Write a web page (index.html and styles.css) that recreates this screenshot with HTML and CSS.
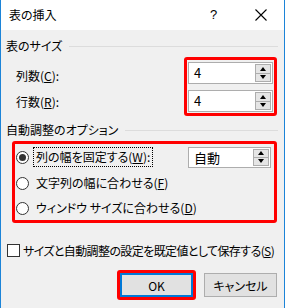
FILE: index.html
```html
<!DOCTYPE html>
<html lang="ja">

<head>
    <meta charset="UTF-8">
    <title>表の挿入</title>
    <link rel="stylesheet" href="styles.css">
</head>

<body>
    <div class="dialog">
        <div class="titlebar">
            <span class="title">表の挿入</span>
            <span class="help">?</span>
            <span class="close">
                <svg width="12" height="12" viewBox="0 0 12 12">
                    <path d="M0.5 0.5 L11.5 11.5 M11.5 0.5 L0.5 11.5" stroke="#000" stroke-width="1.1" fill="none" />
                </svg>
            </span>
        </div>
        <div class="content">
            <div class="group-head">
                <span>表のサイズ</span>
                <i class="rule"></i>
            </div>
            <div class="size-rows">
                <div class="size-labels">
                    <div class="label">列数(<u>C</u>):</div>
                    <div class="label">行数(<u>R</u>):</div>
                </div>
                <div class="mark mark-size">
                    <div class="spin">
                        <span class="spin-value">4</span>
                        <span class="spin-btns">
                            <span class="spin-btn"><i class="arrow-up"></i></span>
                            <span class="spin-btn"><i class="arrow-down"></i></span>
                        </span>
                    </div>
                    <div class="spin">
                        <span class="spin-value">4</span>
                        <span class="spin-btns">
                            <span class="spin-btn"><i class="arrow-up"></i></span>
                            <span class="spin-btn"><i class="arrow-down"></i></span>
                        </span>
                    </div>
                </div>
            </div>
            <div class="group-head group-head-options">
                <span>自動調整のオプション</span>
                <i class="rule"></i>
            </div>
            <div class="mark mark-options">
                <div class="option">
                    <span class="radio checked"></span>
                    <span class="option-text focus">列の幅を固定する(<u>W</u>):</span>
                    <div class="spin spin-auto">
                        <span class="spin-value">自動</span>
                        <span class="spin-btns">
                            <span class="spin-btn"><i class="arrow-up"></i></span>
                            <span class="spin-btn"><i class="arrow-down"></i></span>
                        </span>
                    </div>
                </div>
                <div class="option">
                    <span class="radio"></span>
                    <span class="option-text">文字列の幅に合わせる(<u>F</u>)</span>
                </div>
                <div class="option">
                    <span class="radio"></span>
                    <span class="option-text">ウィンドウ サイズに合わせる(<u>D</u>)</span>
                </div>
            </div>
            <div class="check-row">
                <span class="checkbox"></span>
                <span class="check-text">サイズと自動調整の設定を既定値として保存する(<u>S</u>)</span>
            </div>
            <div class="buttons">
                <div class="mark mark-ok">
                    <button class="btn btn-default">OK</button>
                </div>
                <button class="btn">キャンセル</button>
            </div>
        </div>
    </div>
</body>

</html>
```

FILE: styles.css
```css
* {
    box-sizing: border-box;
}

html,
body {
    margin: 0;
    padding: 0;
}

body {
    width: 285px;
    height: 308px;
    font-family: "Noto Sans CJK JP", "Noto Sans", sans-serif;
    font-size: 12px;
    font-feature-settings: "palt";
    color: #000;
    overflow: hidden;
    white-space: nowrap;
}

u {
    text-decoration: underline;
    text-underline-offset: 1px;
}

.dialog {
    width: 285px;
    height: 308px;
    border-left: 1px solid #1c84d8;
    border-right: 1px solid #1c84d8;
    background: #f0f0f0;
    display: flex;
    flex-direction: column;
}

.titlebar {
    height: 30px;
    background: #fff;
    display: flex;
    align-items: center;
    padding-left: 8px;
}

.title {
    flex: 1;
    line-height: 16px;
}

.help {
    font-size: 13px;
    font-family: "Liberation Sans", sans-serif;
    width: 43px;
    line-height: 16px;
}

.close {
    width: 31px;
    display: flex;
    align-items: center;
    padding-left: 2px;
}

.close svg {
    display: block;
}

.content {
    flex: 1;
    padding: 8px 6px 0 5px;
    display: flex;
    flex-direction: column;
}

.group-head {
    height: 16px;
    line-height: 16px;
    display: flex;
    align-items: center;
}

.group-head .rule {
    flex: 1;
    height: 1px;
    background: #dcdcdc;
    margin-left: 7px;
}

.group-head-options {
    margin-top: 6px;
}

.size-rows {
    margin-top: 3px;
    display: flex;
}

.size-labels {
    flex: 1;
    padding: 8px 0 0 10px;
    display: flex;
    flex-direction: column;
    gap: 4px;
}

.label {
    height: 22px;
    line-height: 22px;
}

.mark {
    border: 3px solid #f00;
    border-radius: 3px;
}

.mark-size {
    width: 93px;
    margin-right: 1px;
    padding: 2px 1px 1px 1px;
    display: flex;
    flex-direction: column;
    gap: 6px;
}

.spin {
    width: 85px;
    height: 22px;
    border: 1px solid #adadad;
    background: #fff;
    display: flex;
    padding: 1px;
}

.spin-value {
    flex: 1;
    padding-left: 4px;
    line-height: 18px;
    font-size: 13px;
}

.spin-btns {
    width: 16px;
    display: flex;
    flex-direction: column;
}

.spin-btn {
    flex: 1;
    border: 1px solid #adadad;
    background: #e5e5e5;
    display: flex;
    align-items: center;
    justify-content: center;
}

.spin-btn + .spin-btn {
    margin-top: -1px;
}

.arrow-up,
.arrow-down {
    width: 0;
    height: 0;
    border-left: 3px solid transparent;
    border-right: 3px solid transparent;
}

.arrow-up {
    border-bottom: 4px solid #000;
}

.arrow-down {
    border-top: 4px solid #000;
}

.mark-options {
    margin: 3px 1px 0 6px;
    display: flex;
    flex-direction: column;
}

.option {
    height: 26px;
    display: flex;
    align-items: center;
}

.option:last-child {
    height: 24px;
}

.radio {
    flex: none;
    width: 13px;
    height: 13px;
    margin-left: 1px;
    border: 1px solid #333;
    border-radius: 50%;
    background: #fff;
    display: flex;
    align-items: center;
    justify-content: center;
}

.radio.checked::after {
    content: "";
    width: 7px;
    height: 7px;
    border-radius: 50%;
    background: #333;
}

.option-text {
    margin-left: 4px;
    padding: 0 2px;
    height: 20px;
    line-height: 18px;
    border: 1px solid transparent;
}

.focus {
    border: 1px dotted #000;
}

.spin-auto {
    flex: none;
    width: 83px;
    height: 21px;
    margin-left: auto;
    margin-right: 3px;
}

.spin-auto .spin-value {
    line-height: 17px;
    font-size: 13px;
    padding-left: 4px;
}

.check-row {
    margin-top: 19px;
    height: 16px;
    display: flex;
    align-items: center;
    padding-left: 1px;
}

.checkbox {
    flex: none;
    width: 13px;
    height: 13px;
    border: 1px solid #333;
    background: #fff;
    margin-right: 3px;
}

.check-text {
    letter-spacing: -0.6px;
}

.buttons {
    margin-top: 12px;
    display: flex;
    justify-content: flex-end;
    align-items: center;
    padding-right: 1px;
}

.mark-ok {
    margin-right: 8px;
    border-radius: 3px;
}

.btn {
    width: 73px;
    height: 24px;
    border: 1px solid #adadad;
    background: #e1e1e1;
    font-family: inherit;
    font-size: 12px;
    font-feature-settings: "palt";
    color: #000;
    padding: 0;
    display: block;
}

.btn-default {
    border: 2px solid #0078d7;
}
```
